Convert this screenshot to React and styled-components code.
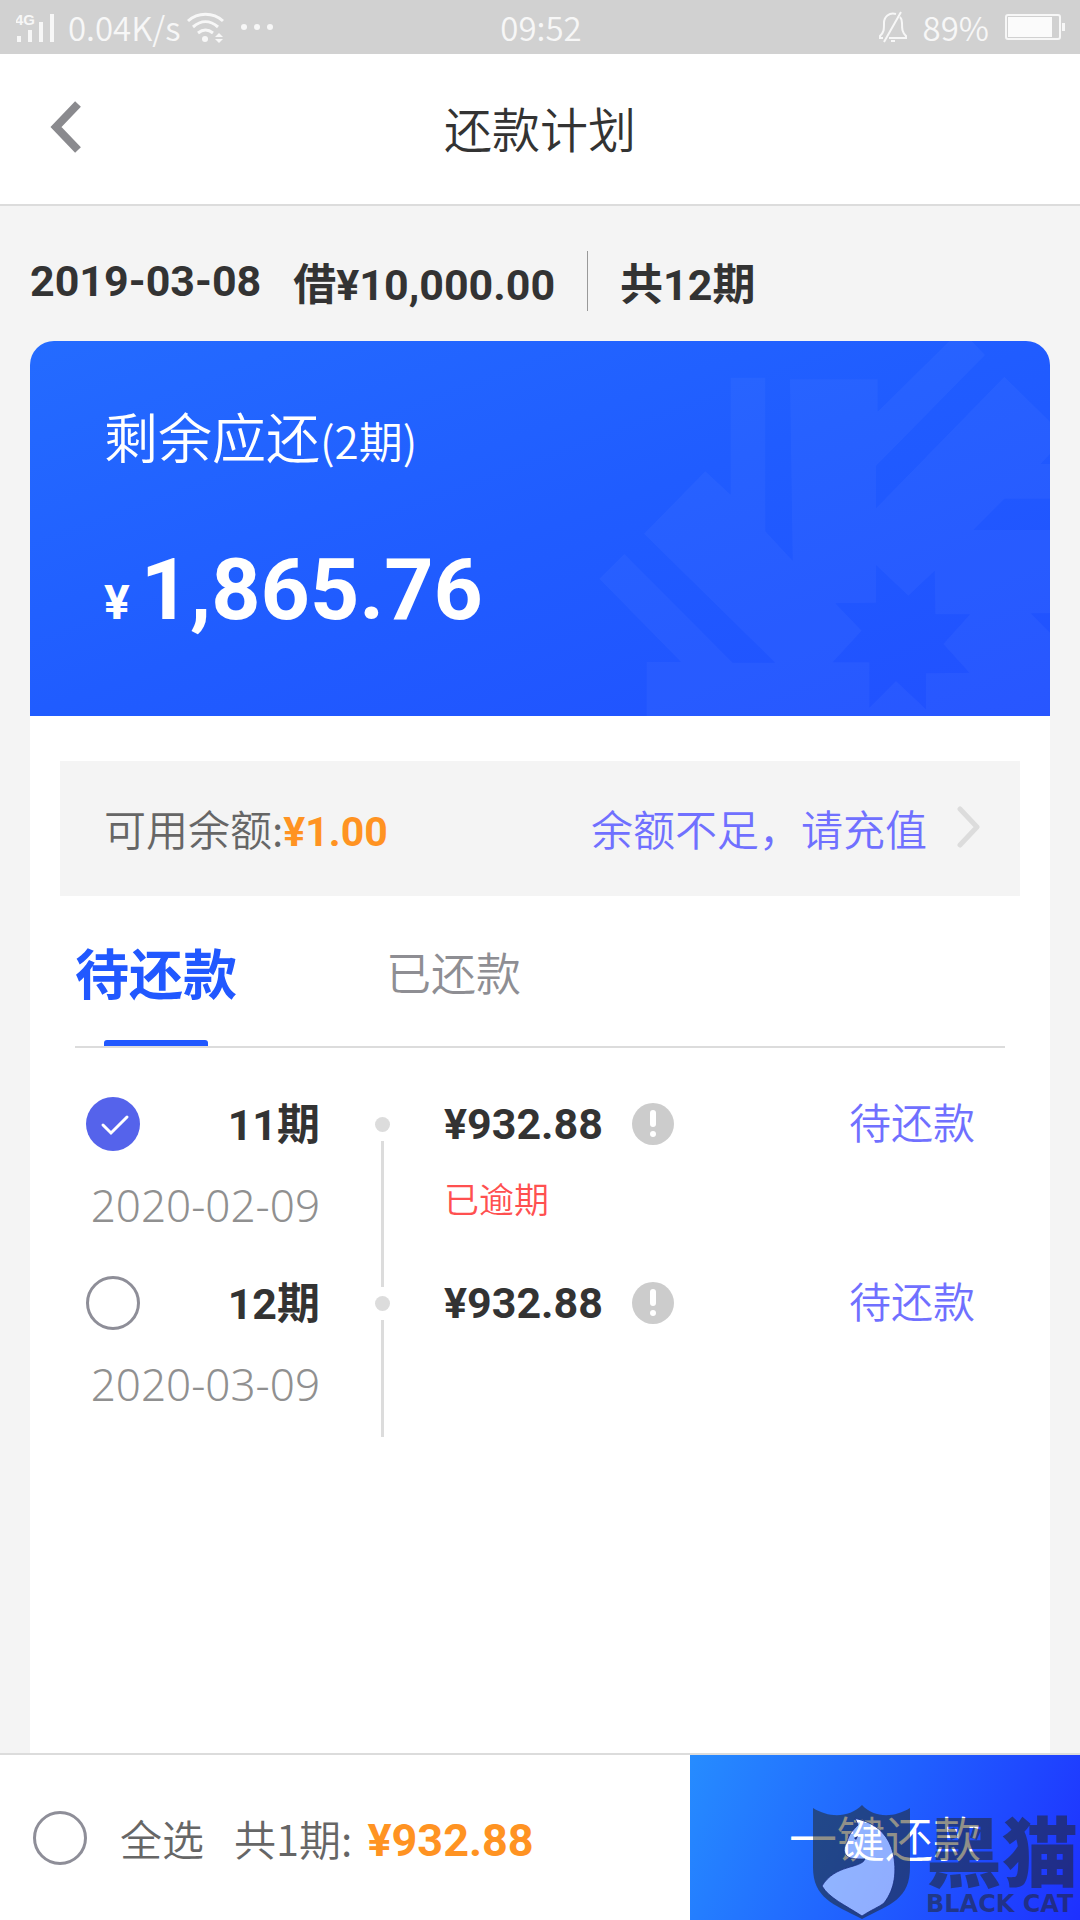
import React, { useState } from "react";
import styled, { createGlobalStyle } from "styled-components";

const GlobalStyle = createGlobalStyle`
  * {
    box-sizing: border-box;
  }
  body {
    margin: 0;
    background: #f4f4f4;
    color: #333;
    font-family: "Noto Sans CJK SC", sans-serif;
    font-weight: 350;
    font-size: 42px;
  }
  button {
    padding: 0;
    border: 0;
    background: none;
    color: inherit;
    font: inherit;
    cursor: pointer;
  }
`;
const Page = styled.div`
  min-height: 100vh;
  display: flex;
  flex-direction: column;
`;
const StatusBar = styled.div`
  height: 54px;
  padding: 0 14px 0 16px;
  display: grid;
  grid-template-columns: 1fr auto 1fr;
  align-items: center;
  background: #d1d1d1;
  color: #f7f7f7;
  font-size: 33px;
  line-height: 54px;
`;
const StatusGroup = styled.div`
  display: flex;
  align-items: center;
  justify-content: ${(p) => (p.$end ? "flex-end" : "flex-start")};
  gap: ${(p) => (p.$end ? "16px" : "6px")};
`;
const Signal = styled.svg`
  margin-right: 8px;
`;
const Dots = styled.svg`
  margin-left: 10px;
`;
const Header = styled.header`
  height: 152px;
  padding: 0 49px 4px;
  display: grid;
  grid-template-columns: 60px 1fr 60px;
  align-items: center;
  background: #fff;
  border-bottom: 2px solid #dcdcdc;
`;
const BackButton = styled.button`
  height: 60px;
  display: flex;
  align-items: center;
`;
const Title = styled.h1`
  margin: 0;
  font-size: 48px;
  font-weight: 350;
  text-align: center;
`;
const Main = styled.main`
  flex: 1;
  padding: 0 30px;
  display: flex;
  flex-direction: column;
`;
const Strong = styled.strong`
  font-family: Roboto, "Noto Sans CJK SC", sans-serif;
  font-size: ${(p) => p.$size || 43}px;
  font-weight: 700;
  color: ${(p) => p.$color || "#333"};
`;
const LoanSummary = styled.div`
  height: 135px;
  padding: 30px 0 15px;
  display: flex;
  align-items: center;
  gap: 32px;
`;
const Divider = styled.span`
  width: 1px;
  height: 60px;
  background: #999;
`;
const BalanceCard = styled.section`
  position: relative;
  height: 375px;
  padding: 59px 74px 0;
  overflow: hidden;
  border-radius: 24px 24px 0 0;
  background: linear-gradient(160deg, #246bff 0%, #205cff 50%, #2150ff 100%);
  color: #fff;
`;
const Pattern = styled.svg`
  position: absolute;
  top: 0;
  right: 0;
  height: 100%;
`;
const CardLabel = styled.div`
  font-size: 54px;
  line-height: 72px;
`;
const CardCount = styled.span`
  font-size: 44px;
`;
const CardAmount = styled.div`
  margin-top: 64px;
  display: flex;
  align-items: baseline;
  gap: 11px;
  line-height: 100px;
`;
const Panel = styled.section`
  flex: 1;
  padding-top: 45px;
  background: #fff;
`;
const Recharge = styled.div`
  height: 135px;
  margin: 0 30px;
  padding: 0 39px 3px 44px;
  display: flex;
  align-items: center;
  justify-content: space-between;
  background: #f4f4f4;
  color: #666;
`;
const RechargeLink = styled.a`
  display: flex;
  align-items: center;
  gap: 30px;
  color: #7070ff;
  text-decoration: none;
`;
const Tabs = styled.div`
  height: 152px;
  margin: 0 45px;
  display: flex;
  gap: 149px;
  border-bottom: 2px solid #dcdcdc;
`;
const Tab = styled.button`
  position: relative;
  height: 150px;
  display: flex;
  align-items: center;
  font-size: ${(p) => (p.$active ? 54 : 45)}px;
  font-weight: ${(p) => (p.$active ? 700 : 350)};
  && {
    color: ${(p) => (p.$active ? "#2158ff" : "#8e8e93")};
  }
  &::after {
    content: "";
    display: ${(p) => (p.$active ? "block" : "none")};
    position: absolute;
    bottom: 0;
    left: calc(50% - 52px);
    width: 104px;
    height: 6px;
    border-radius: 3px 3px 0 0;
    background: #2158ff;
  }
`;
const PlanList = styled.ul`
  margin: 0;
  padding: 49px 75px 0 56px;
  list-style: none;
`;
const PlanItem = styled.li`
  min-height: 179px;
  display: grid;
  grid-template-columns: 234px 124px 1fr auto;
  &:last-child {
    min-height: 161px;
  }
`;
const PlanLine = styled.div`
  height: 54px;
  display: flex;
  align-items: center;
  justify-content: ${(p) => (p.$between ? "space-between" : "flex-start")};
  gap: 29px;
`;
const PlanLabel = styled.label`
  padding-bottom: 6px;
`;
const PlanDate = styled.div`
  margin-top: 29px;
  font-family: "Noto Sans", sans-serif;
  font-size: 44px;
  line-height: 50px;
  text-align: right;
  color: #909090;
`;
const Timeline = styled.div`
  display: flex;
  flex-direction: column;
  align-items: center;
  padding-top: 20px;
  gap: 9px;
  &::before {
    content: "";
    width: 15px;
    height: 15px;
    border-radius: 50%;
    background: #dcdcdc;
  }
  &::after {
    content: "";
    flex: 1;
    width: 3px;
    background: #dcdcdc;
  }
  ${PlanItem}:not(:last-child) &::after {
    margin-bottom: -11px;
  }
`;
const Overdue = styled.div`
  margin-top: 28px;
  font-size: 35px;
  line-height: 38px;
  color: #ff5050;
`;
const PlanStatus = styled.div`
  line-height: 48px;
  color: #7070ff;
`;
const InfoButton = styled.button`
  display: flex;
`;
const Check = styled.input`
  appearance: none;
  width: 54px;
  height: 54px;
  margin: 0;
  border: 3px solid #8e8e98;
  border-radius: 50%;
  background: #fff;
  &:checked {
    border: 0;
    background: #5563eb
      url("data:image/svg+xml,%3Csvg xmlns='http://www.w3.org/2000/svg' viewBox='0 0 54 54' fill='none' stroke='white' stroke-width='3' stroke-linecap='round'%3E%3Cpath d='M17 28l8 8 16-16'/%3E%3C/svg%3E");
  }
`;
const Footer = styled.footer`
  position: relative;
  height: 167px;
  display: flex;
  background: #fff;
  border-top: 2px solid #dcdcdc;
  color: #666;
`;
const Selection = styled.div`
  flex: 1;
  padding-left: 33px;
  display: flex;
  align-items: center;
`;
const SelectAll = styled.label`
  margin-right: 30px;
  display: flex;
  align-items: center;
  gap: 33px;
`;
const Total = styled.div`
  display: flex;
  align-items: baseline;
  gap: 15px;
`;
const PayButton = styled.button`
  width: 390px;
  && {
    padding-bottom: 4px;
    background: linear-gradient(113deg, #268cff, #2060ff 50%, #1e30ff);
    color: #fff;
    font-size: 48px;
  }
`;
const Watermark = styled.div`
  position: absolute;
  right: 2px;
  bottom: 0;
  display: flex;
  align-items: flex-end;
  gap: 16px;
  pointer-events: none;
`;
const WatermarkText = styled.div`
  padding-bottom: 2px;
  color: rgba(34, 34, 20, 0.5);
  font-family: "DejaVu Sans", sans-serif;
  font-size: 24px;
  font-weight: 700;
  line-height: 28px;
  white-space: nowrap;
`;
const WatermarkName = styled.div`
  font-family: "Noto Sans CJK SC", sans-serif;
  font-size: 76px;
  font-weight: 900;
  line-height: 84px;
`;

const plans = [
  { no: 11, date: "2020-02-09", amount: "¥932.88", overdue: true },
  { no: 12, date: "2020-03-09", amount: "¥932.88", overdue: false },
];

const InfoIcon = () => (
  <svg width="42" height="42" viewBox="0 0 42 42">
    <circle cx="21" cy="21" r="21" fill="#ccc" />
    <rect x="18" y="7" width="6" height="17" rx="3" fill="#fff" />
    <circle cx="21" cy="31" r="3" fill="#fff" />
  </svg>
);

const CardPattern = () => (
  <Pattern viewBox="0 33 1470 1125" aria-hidden="true">
    <path
      fill="#fff"
      fillOpacity="0.035"
      fillRule="evenodd"
      d="M260 1158V996H363L118 746L193 672L518 998H645L252 611L436 424L512 494V143H616V604L698 692L690 148H953V245L1168 33H1235L1275 75L948 408V535L1333 140L1470 275V372L1442 402H1470V506H1333L1240 600H1470V850H1412L1470 908V1158Z
      M948 705L1045 797L1124 722L1126 853H1230L1150 942L1228 1028L1098 1030V1138L1008 1053L928 1133V997H818L905 902L826 820L948 818Z"
    />
  </Pattern>
);

const CAT =
  "M42 13L51 16C66 21 76 32 80 48C84 66 82 84 71 98C66 102 58 105 49 111C32 100 16 93 9 81C22 59 48 64 52 54C42 54 36 54 33 50C30 46 31 42 34 37C36 29 40 25 45 20Z";

const CatShield = () => (
  <svg width="97" height="115" viewBox="0 0 97 115" aria-hidden="true">
    <path
      fill="rgb(34,34,20)"
      fillOpacity="0.5"
      fillRule="evenodd"
      d={`M0 3C16 13 36 13 49 0C61 13 81 13 97 3V62C97 94 78 99 49 114C20 99 0 93 0 62Z${CAT}`}
    />
    <path fill="#fff" fillOpacity="0.5" d={CAT} />
    <path fill="none" stroke="#1c2f80" strokeOpacity="0.8" d={CAT} />
    <path fill="#1c2f80" d="M41 33l4-2-2 4z" />
  </svg>
);

const StatusIcons = () => (
  <StatusBar>
    <StatusGroup>
      <Signal width="38" height="30" viewBox="0 0 38 30" fill="#f7f7f7">
        <text x="-1" y="13" fontFamily="Liberation Sans" fontSize="15" fontWeight="700">
          4G
        </text>
        <rect x="1" y="24" width="4" height="6" />
        <rect x="12" y="18" width="4" height="12" />
        <rect x="23" y="10" width="4" height="20" />
        <rect x="34" y="2" width="4" height="28" />
      </Signal>
      <span>0.04K/s</span>
      <svg width="37" height="31" viewBox="0 0 37 31" fill="none" stroke="#f7f7f7" strokeWidth="3">
        <path d="M1 9C11 0 26 0 36 9" />
        <path d="M6 15C14 8 23 8 31 15" />
        <path d="M11 21C16 17 21 17 26 21" />
        <circle cx="18" cy="27" r="3" fill="#f7f7f7" stroke="none" />
        <path d="M28 25l4-4 4 4zM28 27l4 4 4-4z" fill="#f7f7f7" stroke="none" />
      </svg>
      <Dots width="34" height="8" viewBox="0 0 34 8" fill="#f7f7f7">
        <circle cx="4" cy="4" r="3" />
        <circle cx="17" cy="4" r="3" />
        <circle cx="30" cy="4" r="3" />
      </Dots>
    </StatusGroup>
    <span>09:52</span>
    <StatusGroup $end>
      <svg width="28" height="32" viewBox="0 0 28 32" fill="none" stroke="#f7f7f7" strokeWidth="2">
        <path d="M17 3C10 1 5 6 5 12C5 19 5 21 1 25V27H4M10 27H27V25C23 21 23 18 23 12C23 9 22 7 21 6" />
        <path d="M22 1L5 31M12 30H16" />
      </svg>
      <span>89%</span>
      <svg width="61" height="28" viewBox="0 0 61 28">
        <rect x="1" y="2" width="54" height="24" rx="2" fill="none" stroke="#f7f7f7" strokeWidth="2" />
        <rect x="3" y="4" width="44" height="20" fill="#fbfbfb" />
        <rect x="57" y="10" width="3" height="8" fill="#f7f7f7" />
      </svg>
    </StatusGroup>
  </StatusBar>
);

const App = () => {
  const [tab, setTab] = useState("pending");
  return (
    <Page>
      <GlobalStyle />
      <StatusIcons />
      <Header>
        <BackButton aria-label="返回">
          <svg width="33" height="52" viewBox="0 0 33 52" fill="none" stroke="#8a8a8e" strokeWidth="8">
            <path d="M29 3L7 26L29 49" />
          </svg>
        </BackButton>
        <Title>还款计划</Title>
      </Header>
      <Main>
        <LoanSummary>
          <Strong>2019-03-08</Strong>
          <Strong>借¥10,000.00</Strong>
          <Divider />
          <Strong>共12期</Strong>
        </LoanSummary>
        <BalanceCard>
          <CardPattern />
          <CardLabel>
            剩余应还<CardCount>(2期)</CardCount>
          </CardLabel>
          <CardAmount>
            <Strong $color="#fff" $size={48}>
              ¥
            </Strong>
            <Strong $color="#fff" $size={86}>
              1,865.76
            </Strong>
          </CardAmount>
        </BalanceCard>
        <Panel>
          <Recharge>
            <span>
              可用余额:
              <Strong $color="#ff9322" $size={41}>
                ¥1.00
              </Strong>
            </span>
            <RechargeLink href="#recharge">
              余额不足，请充值
              <svg width="24" height="42" viewBox="0 0 24 42" fill="none" stroke="#dcdcdc" strokeWidth="5">
                <path d="M3 3L20 21L3 39" strokeLinecap="round" strokeLinejoin="round" />
              </svg>
            </RechargeLink>
          </Recharge>
          <Tabs role="tablist">
            <Tab role="tab" $active={tab === "pending"} onClick={() => setTab("pending")}>
              待还款
            </Tab>
            <Tab role="tab" $active={tab === "paid"} onClick={() => setTab("paid")}>
              已还款
            </Tab>
          </Tabs>
          <PlanList>
            {plans.map((plan) => (
              <PlanItem key={plan.no}>
                <div>
                  <PlanLine $between>
                    <Check type="checkbox" id={`plan-${plan.no}`} defaultChecked={plan.overdue} />
                    <PlanLabel htmlFor={`plan-${plan.no}`}>
                      <Strong>{plan.no}期</Strong>
                    </PlanLabel>
                  </PlanLine>
                  <PlanDate>{plan.date}</PlanDate>
                </div>
                <Timeline />
                <div>
                  <PlanLine>
                    <Strong>{plan.amount}</Strong>
                    <InfoButton aria-label="还款明细">
                      <InfoIcon />
                    </InfoButton>
                  </PlanLine>
                  {plan.overdue && <Overdue>已逾期</Overdue>}
                </div>
                <PlanStatus>待还款</PlanStatus>
              </PlanItem>
            ))}
          </PlanList>
        </Panel>
      </Main>
      <Footer>
        <Selection>
          <SelectAll>
            <Check type="checkbox" />
            全选
          </SelectAll>
          <Total>
            共1期:
            <Strong $color="#ff9322" $size={45}>
              ¥932.88
            </Strong>
          </Total>
        </Selection>
        <PayButton>一键还款</PayButton>
        <Watermark>
          <CatShield />
          <WatermarkText>
            <WatermarkName>黑猫</WatermarkName>
            BLACK CAT
          </WatermarkText>
        </Watermark>
      </Footer>
    </Page>
  );
};

export default App;
